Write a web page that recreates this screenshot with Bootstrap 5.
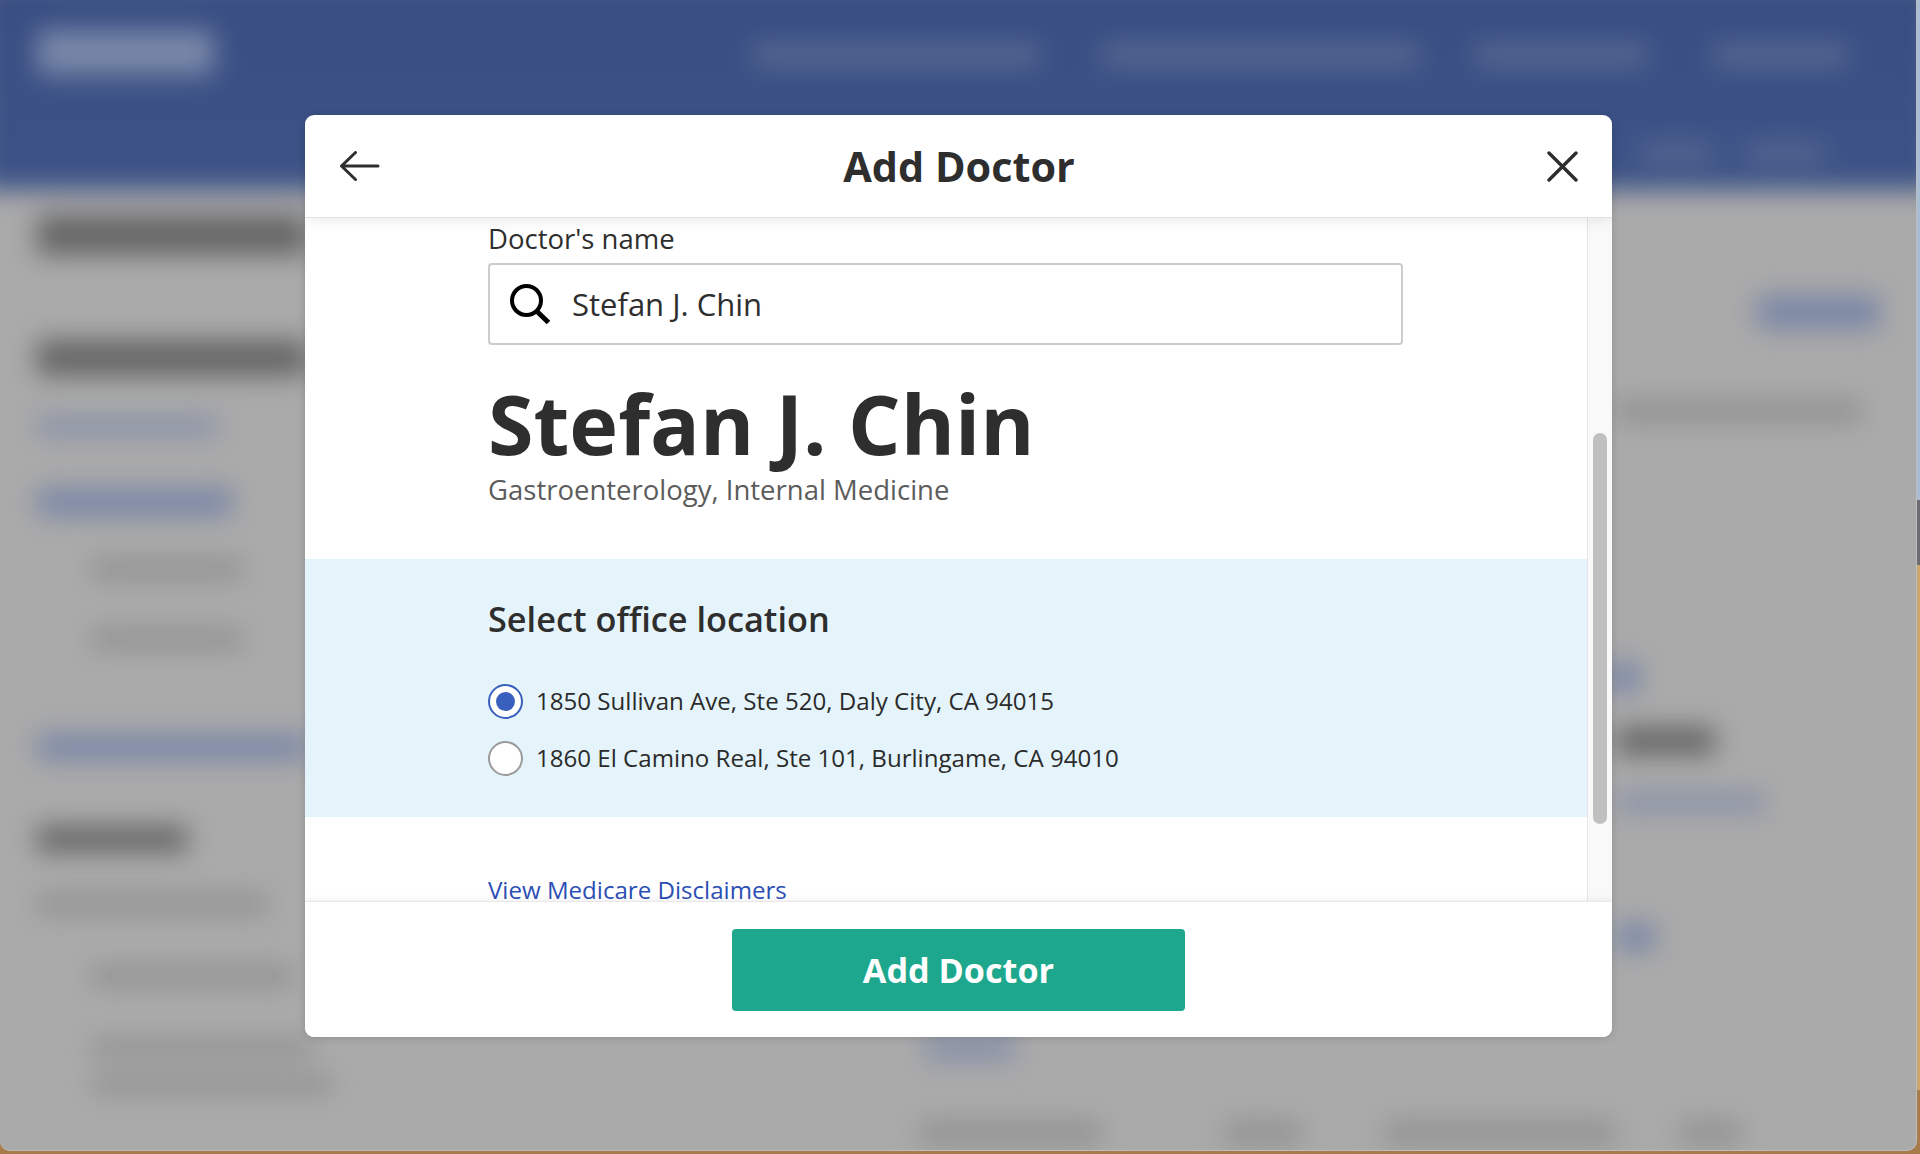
<!DOCTYPE html>
<html lang="en">
<head>
    <meta charset="UTF-8">
    <meta name="viewport" content="width=device-width, initial-scale=1, shrink-to-fit=no">
    <title>Add Doctor</title>
    <link href="https://cdn.jsdelivr.net/npm/bootstrap@5.3.0/dist/css/bootstrap.min.css" rel="stylesheet">
    <style>
        html, body { height: 100%; }
        body { background: linear-gradient(#a9bcd6 0 500px, #6d6a72 500px 565px, #c9a76e 565px 1090px, #a87b4a 1090px); overflow: hidden; font-family: "Open Sans", "Noto Sans", sans-serif; color: #2e2e2e; }

        /* page behind the dialog: only blurred bars, nothing readable */
        .page-window { width: 1917px; height: 1151px; background: #aaaaaa; border-right: 1px solid #bdbdbd; border-bottom: 1px solid #bdbdbd; border-radius: 0 0 10px 10px; overflow: hidden; }
        .page-blur { filter: blur(13px); margin: -20px -20px 0; width: 1957px; }
        .page-head { height: 210px; background: linear-gradient(#384d82, #3d5387); padding: 50px 0 0 57px; }
        .blob { flex: none; }
        .blob-logo { background: #7a88a8; }
        .blob-nav { background: #566891; height: 24px; }
        .blob-dark { background: #666; }
        .blob-mid { background: #8e8e8e; }
        .blob-link { background: #8891a8; }
        .blob-blue { background: #7a87a6; }

        .head-logo { width: 177px; height: 45px; }
        .head-nav { margin: 13px 0 0 539px; }
        .n1 { width: 287px; }
        .n2 { width: 318px; margin-left: 62px; }
        .n3 { width: 172px; margin-left: 55px; }
        .n4 { width: 134px; margin-left: 67px; }
        .head-sub { margin: 68px 0 0 1603px; }
        .s1 { width: 74px; height: 20px; }
        .s2 { width: 80px; height: 20px; margin-left: 31px; }

        .page-side { width: 337px; padding-left: 57px; }
        .l1 { width: 270px; height: 40px; margin-top: 25px; }
        .l2 { width: 270px; height: 36px; margin-top: 85px; }
        .l3 { width: 180px; height: 20px; margin-top: 40px; }
        .l4 { width: 195px; height: 28px; margin-top: 52px; }
        .l5 { width: 150px; height: 18px; margin: 44px 0 0 55px; }
        .l6 { width: 150px; height: 18px; margin: 52px 0 0 55px; }
        .l7 { width: 270px; height: 26px; margin-top: 86px; }
        .l8 { width: 150px; height: 26px; margin-top: 66px; }
        .l9 { width: 230px; height: 18px; margin-top: 43px; }
        .l10 { width: 200px; height: 18px; margin: 54px 0 0 55px; }
        .l11 { width: 220px; height: 16px; margin: 55px 0 0 55px; }
        .l12 { width: 240px; height: 16px; margin: 20px 0 0 55px; }

        .page-mid { width: 1288px; }
        .m1 { width: 90px; height: 28px; margin: 843px 0 0 608px; }
        .page-bottom { margin-top: 62px; }
        .b1 { width: 180px; height: 20px; margin-left: 603px; }
        .b2 { width: 75px; height: 20px; margin-left: 125px; }
        .b3 { width: 230px; height: 20px; margin-left: 85px; }
        .b4 { width: 60px; height: 20px; margin-left: 65px; }

        .page-right { width: 275px; }
        .r1 { width: 123px; height: 34px; margin: 105px 0 0 152px; }
        .r2 { width: 244px; height: 20px; margin: 72px 0 0 11px; }
        .r3 { width: 35px; height: 30px; margin-top: 241px; }
        .r4 { width: 99px; height: 28px; margin: 35px 0 0 11px; }
        .r5 { width: 149px; height: 20px; margin: 37px 0 0 11px; }
        .r6 { width: 39px; height: 28px; margin: 111px 0 0 11px; }

        .doctor-dialog { position: absolute; left: 305px; top: 115px; width: 1307px; height: 922px; background: #fff; border-radius: 9px; overflow: hidden; box-shadow: 0 1px 8px rgba(0,0,0,.15); }
        .dialog-top { height: 103px; padding: 0 34px 0 35px; border-bottom: 1px solid #e1e1e1; box-shadow: 0 3px 14px rgba(0,0,0,.08); z-index: 2; }
        .dialog-side { flex: 1 1 0; }
        .dialog-title { font-size: 41.400px; font-weight: 700; line-height: 1; padding-top: 2px; }
        .dialog-body { flex: 1; min-height: 0; overflow: hidden; }
        .dialog-scroll { flex: 1; min-width: 0; }
        .dialog-fake-bar { width: 25px; background: #f9f9f9; border-left: 1px solid #e6e6e6; padding: 215px 5px 0 5px; }
        .dialog-fake-thumb { height: 391px; background: #c0c0c0; border-radius: 7px; }
        .doctor-block { padding: 2px 0 0 183px; height: 341px; }
        .field-label { font-size: 27.500px; line-height: 38px; margin: 0 0 5px; }
        .doctor-search { width: 915px; height: 82px; border: 2px solid #cdcdcd; border-radius: 4px; padding: 0 0 0 19px; gap: 21px; font-size: 31px; }
        .doctor-name { font-size: 82.600px; font-weight: 700; line-height: 75px; margin: 41px 0 0; }
        .doctor-spec { font-size: 27.500px; color: #5c5c5c; line-height: 36px; margin: 11px 0 0; }
        .office-block { background: #e5f4fb; height: 258px; padding: 37px 0 0 183px; }
        .office-title { font-size: 34.300px; font-weight: 600; line-height: 46px; margin: 0 0 31px; }
        .office-row { gap: 13px; height: 57px; font-size: 24.100px; color: #2b2b2b; }
        .office-radio { width: 35px; height: 35px; border-radius: 50%; border: 2px solid #9a9a9a; background: #fff; flex: none; }
        .office-radio.on { border-color: #3a60bd; padding: 6px; }
        .office-radio.on span { width: 19px; height: 19px; background: #3a60bd; border-radius: 50%; display: block; }
        .disclaim-row { padding: 62px 0 0 183px; font-size: 24.100px; line-height: 22px; }
        .disclaim-row a { color: #2c4fb5; text-decoration: none; }
        .dialog-foot { height: 136px; border-top: 1px solid #e8e8e8; box-shadow: 0 -2px 6px rgba(0,0,0,.06); z-index: 2; background: #fff; }
        .add-doctor-btn { width: 453px; height: 82px; background: #1da88e; border: 0; border-radius: 4px; color: #fff; font-size: 34.200px; font-weight: 700; }
    </style>
</head>
<body>
    <div class="page-window">
        <div class="page-blur">
            <div class="page-head d-flex flex-column">
                <div class="d-flex align-items-start">
                    <div class="blob blob-logo head-logo"></div>
                    <div class="d-flex head-nav">
                        <div class="blob blob-nav n1"></div>
                        <div class="blob blob-nav n2"></div>
                        <div class="blob blob-nav n3"></div>
                        <div class="blob blob-nav n4"></div>
                    </div>
                </div>
                <div class="d-flex head-sub">
                    <div class="blob blob-nav s1"></div>
                    <div class="blob blob-nav s2"></div>
                </div>
            </div>
            <div class="d-flex">
                <div class="page-side flex-none d-flex flex-column">
                    <div class="blob blob-dark l1"></div>
                    <div class="blob blob-dark l2"></div>
                    <div class="blob blob-link l3"></div>
                    <div class="blob blob-blue l4"></div>
                    <div class="blob blob-mid l5"></div>
                    <div class="blob blob-mid l6"></div>
                    <div class="blob blob-blue l7"></div>
                    <div class="blob blob-dark l8"></div>
                    <div class="blob blob-mid l9"></div>
                    <div class="blob blob-mid l10"></div>
                    <div class="blob blob-mid l11"></div>
                    <div class="blob blob-mid l12"></div>
                </div>
                <div class="page-mid d-flex flex-column">
                    <div class="blob blob-link m1"></div>
                    <div class="d-flex page-bottom">
                        <div class="blob blob-mid b1"></div>
                        <div class="blob blob-mid b2"></div>
                        <div class="blob blob-mid b3"></div>
                        <div class="blob blob-mid b4"></div>
                    </div>
                </div>
                <div class="page-right d-flex flex-column">
                    <div class="blob blob-blue r1"></div>
                    <div class="blob blob-mid r2"></div>
                    <div class="blob blob-blue r3"></div>
                    <div class="blob blob-dark r4"></div>
                    <div class="blob blob-link r5"></div>
                    <div class="blob blob-blue r6"></div>
                </div>
            </div>
        </div>
    </div>

    <div class="doctor-dialog d-flex flex-column">
        <div class="dialog-top d-flex align-items-center position-relative">
            <div class="dialog-side d-flex">
                <svg width="40" height="30" viewBox="0 0 40 30" fill="none" stroke="#2e2e2e" stroke-width="3" stroke-linecap="round" stroke-linejoin="round"><path d="M1.500 15H38M15.500 1.500 1.500 15 15.500 28.500"/></svg>
            </div>
            <div class="dialog-title">Add Doctor</div>
            <div class="dialog-side d-flex justify-content-end">
                <svg width="31" height="31" viewBox="0 0 31 31" fill="none" stroke="#2e2e2e" stroke-width="3.400" stroke-linecap="round"><path d="M2 2 29 29M29 2 2 29"/></svg>
            </div>
        </div>
        <div class="dialog-body d-flex">
            <div class="dialog-scroll">
                <div class="doctor-block">
                    <p class="field-label">Doctor's name</p>
                    <div class="doctor-search d-flex align-items-center">
                        <svg width="42" height="42" viewBox="0 0 42 42" fill="none" stroke="#000" stroke-width="4"><circle cx="17.500" cy="17.500" r="14.500"/><path d="M27.500 28 39.500 39.500" stroke-width="5"/></svg>
                        <span>Stefan J. Chin</span>
                    </div>
                    <h1 class="doctor-name">Stefan J. Chin</h1>
                    <p class="doctor-spec">Gastroenterology, Internal Medicine</p>
                </div>
                <div class="office-block">
                    <h2 class="office-title">Select office location</h2>
                    <div class="office-row d-flex align-items-center"><span class="office-radio on"><span></span></span>1850 Sullivan Ave, Ste 520, Daly City, CA 94015</div>
                    <div class="office-row d-flex align-items-center"><span class="office-radio"></span>1860 El Camino Real, Ste 101, Burlingame, CA 94010</div>
                </div>
                <div class="disclaim-row"><a href="#">View Medicare Disclaimers</a></div>
            </div>
            <div class="dialog-fake-bar"><div class="dialog-fake-thumb"></div></div>
        </div>
        <div class="dialog-foot d-flex align-items-center justify-content-center">
            <button type="button" class="btn add-doctor-btn">Add Doctor</button>
        </div>
    </div>

    <script src="https://cdn.jsdelivr.net/npm/bootstrap@5.3.0/dist/js/bootstrap.bundle.min.js"></script>
</body>
</html>
